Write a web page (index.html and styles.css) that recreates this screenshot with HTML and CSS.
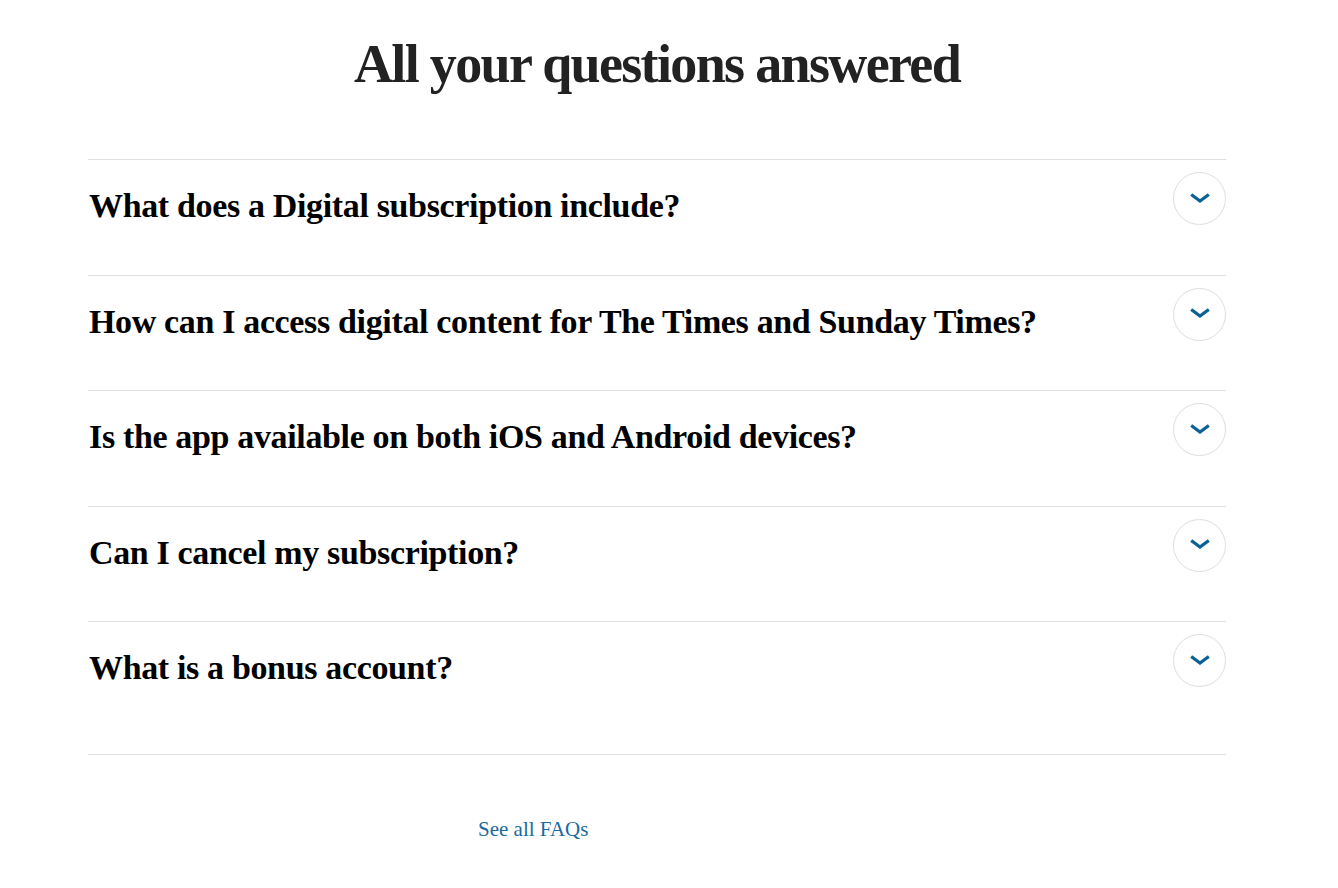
FILE: index.html
```html
<!DOCTYPE html>
<html lang="en">
<head>
<meta charset="utf-8">
<title>FAQs</title>
<link rel="stylesheet" href="styles.css">
</head>
<body>
<section class="faq">
  <h2 class="faq-title">All your questions answered</h2>
  <ul class="faq-list">
    <li class="faq-item">
      <span class="faq-q">What does a Digital subscription include?</span>
      <button class="faq-toggle" aria-label="Expand"><svg class="chev" viewBox="0 0 20 10" width="20" height="10"><path d="M1.2 1.5 L10 8 L18.8 1.5" fill="none" stroke="currentColor" stroke-width="3.2"/></svg></button>
    </li>
    <li class="faq-item">
      <span class="faq-q">How can I access digital content for The Times and Sunday Times?</span>
      <button class="faq-toggle" aria-label="Expand"><svg class="chev" viewBox="0 0 20 10" width="20" height="10"><path d="M1.2 1.5 L10 8 L18.8 1.5" fill="none" stroke="currentColor" stroke-width="3.2"/></svg></button>
    </li>
    <li class="faq-item">
      <span class="faq-q">Is the app available on both iOS and Android devices?</span>
      <button class="faq-toggle" aria-label="Expand"><svg class="chev" viewBox="0 0 20 10" width="20" height="10"><path d="M1.2 1.5 L10 8 L18.8 1.5" fill="none" stroke="currentColor" stroke-width="3.2"/></svg></button>
    </li>
    <li class="faq-item">
      <span class="faq-q">Can I cancel my subscription?</span>
      <button class="faq-toggle" aria-label="Expand"><svg class="chev" viewBox="0 0 20 10" width="20" height="10"><path d="M1.2 1.5 L10 8 L18.8 1.5" fill="none" stroke="currentColor" stroke-width="3.2"/></svg></button>
    </li>
    <li class="faq-item faq-item-last">
      <span class="faq-q">What is a bonus account?</span>
      <button class="faq-toggle" aria-label="Expand"><svg class="chev" viewBox="0 0 20 10" width="20" height="10"><path d="M1.2 1.5 L10 8 L18.8 1.5" fill="none" stroke="currentColor" stroke-width="3.2"/></svg></button>
    </li>
  </ul>
  <div class="faq-more"><a href="#" class="faq-link">See all FAQs</a></div>
</section>
</body>
</html>
```
FILE: styles.css
```css
* { box-sizing: border-box; }
html, body { margin: 0; padding: 0; background: #fff; }
body { font-family: "Liberation Serif", "Times New Roman", serif; color: #000; }

.faq { width: 1138px; margin: 0 0 0 88px; padding-top: 33px; }

.faq-title {
  margin: 0 0 64px;
  text-align: center;
  font-size: 54px;
  line-height: 62px;
  font-weight: 700;
  letter-spacing: -1.65px;
  color: #222;
}

.faq-list { list-style: none; margin: 0; padding: 0; border-bottom: 1px solid #e0e0e0; }

.faq-item {
  display: flex;
  align-items: flex-start;
  justify-content: space-between;
  border-top: 1px solid #e0e0e0;
  padding: 12px 0 0;
  height: 115.5px;
}
.faq-item-last { height: 133px; }

.faq-q {
  padding-top: 14px;
  font-size: 34px;
  line-height: 40px;
  font-weight: 700;
  letter-spacing: -0.35px;
  padding-left: 1px;
}

.faq-toggle {
  flex: none;
  width: 53px;
  height: 53px;
  border-radius: 50%;
  border: 1px solid #dedede;
  background: #fff;
  color: #0b6193;
  display: flex;
  align-items: center;
  justify-content: center;
  padding: 0;
  cursor: pointer;
}
.chev { margin-bottom: 2px; }

.faq-more { padding: 62px 0 0 390px; }
.faq-link {
  font-size: 21px;
  color: #1b6aa0;
  text-decoration: none;
}
```
